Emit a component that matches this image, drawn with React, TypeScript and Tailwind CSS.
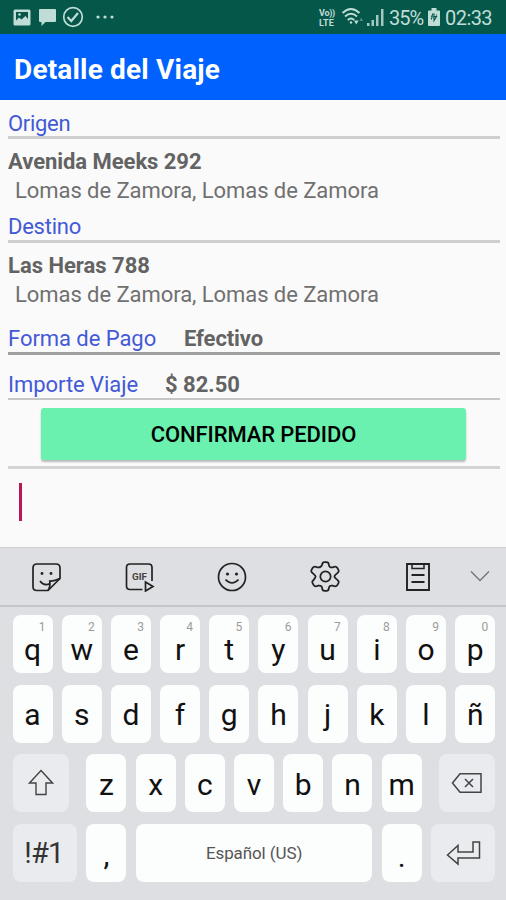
import type { ReactNode } from "react";

const label = "text-[22px] text-[#4359d6]";
const strong = "text-[22px] font-bold text-[#636363]";

function Place({ title, detail, strongSpacing }: { title: string; detail: string; strongSpacing: string }) {
  return (
    <div className="pt-[8px] leading-[30px]">
      <div className={`${strong} ${strongSpacing}`}>{title}</div>
      <div className="-mt-px pl-[7px] text-[22px] tracking-[-0.06px] text-[#707070]">{detail}</div>
    </div>
  );
}

function Key({ children, hint, className = "w-10" }: { children: ReactNode; hint?: string; className?: string }) {
  return (
    <div className={`relative flex h-[58px] shrink-0 items-center justify-center rounded-[8px] bg-[#fcfdfd] text-[30px] leading-none text-[#111] ${className}`}>
      {hint && <span className="absolute right-[7px] top-[6px] text-[12px] leading-none text-[#9b9b9b]">{hint}</span>}
      {children}
    </div>
  );
}

function Letters({ text }: { text: string }) {
  return (
    <>
      {text.split("").map((c) => (
        <Key key={c}><span className="pt-[3px]">{c}</span></Key>
      ))}
    </>
  );
}

function StatusBar() {
  return (
    <div className="flex h-[34px] items-center bg-[#045749] text-[#c0dcd6]">
      <svg className="ml-[13px]" width="18" height="17" viewBox="0 0 18 17">
        <path fill="currentColor" fillRule="evenodd" d="M2 .5h14a1.500 1.500 0 0 1 1.500 1.500v13a1.500 1.500 0 0 1-1.500 1.500H2A1.500 1.500 0 0 1 .5 15V2A1.500 1.500 0 0 1 2 .5zM3 3v8.500l3-3 2.500 2 4-3.500 2.500 3V3z" />
        <circle cx="6.500" cy="5.500" r="1.300" fill="currentColor" />
      </svg>
      <svg className="ml-[7px]" width="19" height="19" viewBox="0 0 19 19">
        <path fill="currentColor" d="M2 1h15q1 0 1 1v11q0 1-1 1H7.500L3.500 18v-4H2q-1 0-1-1V2q0-1 1-1z" />
      </svg>
      <svg className="ml-[5px]" width="22" height="22" viewBox="0 0 22 22" fill="none" stroke="currentColor">
        <circle cx="11" cy="11" r="9.300" strokeWidth="1.700" />
        <path d="M5.500 11l3.800 4L16 7" strokeWidth="2.200" />
      </svg>
      <svg className="ml-[11px]" width="20" height="6" viewBox="0 0 20 6" fill="currentColor">
        <circle cx="3" cy="3" r="1.600" /><circle cx="10" cy="3" r="1.600" /><circle cx="17" cy="3" r="1.600" />
      </svg>
      <div className="ml-auto mt-[2px] flex w-[20px] flex-col gap-px text-[9px] font-bold leading-[9px]">
        <div className="tracking-[-0.3px]">Vo))</div>
        <div className="tracking-[0.2px]">LTE</div>
      </div>
      <svg className="ml-[2px] shrink-0" width="23" height="20" viewBox="0 0 23 20" fill="none" stroke="currentColor" strokeWidth="1.900">
        <path d="M1.500 6q8.500-8 17 0M4 9.500q6-5.500 12 0M6.800 13q3.200-3 6.400 0" />
        <circle cx="10" cy="15.500" r="1.200" fill="currentColor" stroke="none" />
        <path fill="currentColor" stroke="none" d="M13 13.500h4.500L15.250 17.500z" />
        <path fill="currentColor" stroke="none" opacity=".4" d="M18.500 14h3.500l-1.750-3.500z" />
      </svg>
      <svg className="ml-[2px] shrink-0" width="19" height="19" viewBox="0 0 19 19" fill="currentColor">
        <path d="M1 15h2.500v3H1zM5.500 12H8v6H5.500zM10 7h2.500v11H10zM15 1h2.500v17H15z" opacity=".85" />
      </svg>
      <span className="ml-[4px] w-[35px] whitespace-nowrap pt-px text-[20px] leading-[22px] tracking-[-1px]">35%</span>
      <svg className="ml-[4px] shrink-0" width="12" height="18" viewBox="0 0 12 18">
        <path fill="currentColor" d="M3.500 0h5v2.500H11q1 0 1 1V17q0 1-1 1H1q-1 0-1-1V3.500q0-1 1-1h2.500z" />
        <path fill="none" stroke="#045749" strokeWidth="1.100" d="M5 5.500 3.500 9H6v3.500L8.500 8.500H6V5.500M3.500 10v1.500M8.500 6.500v1" />
      </svg>
      <span className="ml-[5px] mr-[14px] w-[47px] whitespace-nowrap pt-px text-[20px] leading-[22px] tracking-[-0.55px]">02:33</span>
    </div>
  );
}

function Toolbar() {
  return (
    <div className="flex h-[59px] items-center border-b-2 border-[#c3c5cc] pl-[31px] text-[#222]">
      <svg width="30" height="30" viewBox="0 0 30 30" fill="none" stroke="currentColor" strokeWidth="1.700">
        <path d="M17 28.500H6q-4 0-4-4V6q0-4 4-4h19q4 0 4 4v10.500z" />
        <path d="M17 28.500q2.500-3 1.800-9.500 4 .5 10.200-2.500M9 19q4 5.500 10 2.500" />
        <circle cx="11" cy="11.500" r="1.400" fill="currentColor" stroke="none" />
        <circle cx="20" cy="11.500" r="1.400" fill="currentColor" stroke="none" />
      </svg>
      <svg className="ml-[63px]" width="31" height="30" viewBox="0 0 31 30" fill="none" stroke="currentColor" strokeWidth="1.700">
        <path d="M18.500 27.500H6q-3.500 0-3.500-3.500V5.500Q2.500 2 6 2h18.500Q28 2 28 5.500V19" />
        <path d="M21.500 20v9l7.500-4.500z" />
        <text x="8" y="18" fontSize="9" fontWeight="700" fill="#444" stroke="none" textLength="15" lengthAdjust="spacingAndGlyphs">GIF</text>
      </svg>
      <svg className="ml-[62px]" width="30" height="30" viewBox="0 0 30 30" fill="none" stroke="currentColor" strokeWidth="1.700">
        <circle cx="15" cy="15" r="13.500" />
        <path d="M8.500 17.500q6.500 7 13 0" />
        <circle cx="10.500" cy="12" r="1.600" fill="currentColor" stroke="none" />
        <circle cx="19.500" cy="12" r="1.600" fill="currentColor" stroke="none" />
      </svg>
      <svg className="ml-[63px]" width="31" height="31" viewBox="0 0 30 30" fill="none" stroke="currentColor" strokeWidth="1.700" strokeLinejoin="round">
        <path d="M11.800 3.500Q12 1.200 14 1.200h2q2 0 2.200 2.300.3 3.300 3.800 2.600l1.500-.5q2-.5 3 1.200l1 1.800q.9 1.800-1 3.100-2.900 2.300-2.900 3.300t2.900 3.300q1.900 1.300 1 3.100l-1 1.800q-1 1.700-3 1.200l-1.500-.5q-3.500-.7-3.800 2.600-.2 2.300-2.200 2.300h-2q-2 0-2.200-2.300-.3-3.300-3.800-2.600l-1.500.5q-2 .5-3-1.200l-1-1.800q-.9-1.800 1-3.100Q5.400 16 5.400 15t-2.900-3.300q-1.900-1.300-1-3.100l1-1.800q1-1.700 3-1.200l1.500.5q3.500.7 4.800-2.600z" />
        <circle cx="15" cy="15" r="5" />
      </svg>
      <svg className="ml-[64px]" width="26" height="30" viewBox="0 0 26 30" fill="none" stroke="currentColor" strokeWidth="1.900">
        <path d="M2 2h22v26H2zM6.500 13h13M6.500 20h13" />
        <path d="M7 2v4.500h12V2" strokeWidth="1.500" />
      </svg>
      <svg className="ml-[39px]" width="20" height="13" viewBox="0 0 20 13" fill="none" stroke="#73757a" strokeWidth="1.400"><path d="M1 1.500l9 9 9-9" /></svg>
    </div>
  );
}

export default function App() {
  return (
    <div className="flex h-[900px] w-[506px] flex-col overflow-hidden bg-[#fafafa] font-[Roboto,sans-serif]">
      <StatusBar />
      <header className="flex h-[66px] items-center bg-[#0061ff] pl-[14px] pt-[5px] text-[28px] font-bold leading-none tracking-[0.18px] text-white">
        <span className="whitespace-nowrap">Detalle del Viaje</span>
      </header>
      <main className="h-[447px] whitespace-nowrap pl-2 pr-[6px]">
        <div className={`${label} h-[39px] border-b-[3px] border-[#cfcfcf] pt-[11px] leading-[26px] tracking-[-0.3px]`}>Origen</div>
        <Place title="Avenida Meeks 292" detail="Lomas de Zamora, Lomas de Zamora" strongSpacing="tracking-[-0.05px]" />
        <div className={`${label} h-[37px] border-b-[3px] border-[#cfcfcf] pt-[8px] leading-[26px] tracking-[-0.25px]`}>Destino</div>
        <Place title="Las Heras 788" detail="Lomas de Zamora, Lomas de Zamora" strongSpacing="tracking-[0px]" />
        <div className="flex h-[45px] border-b-[3px] border-[#a0a0a0] pt-[15px] leading-[27px]">
          <span className={`${label} w-[176px] tracking-[-0.05px]`}>Forma de Pago</span>
          <span className={`${strong} tracking-[-0.1px]`}>Efectivo</span>
        </div>
        <div className="flex h-[45px] border-b-2 border-[#c6c6c6] pt-[16px] leading-[27px]">
          <span className={`${label} w-[157px] tracking-[-0.05px]`}>Importe Viaje</span>
          <span className={strong}>$ 82.50</span>
        </div>
        <div className="flex h-[69px] border-b-[3px] border-[#d4d4d4] pl-[33px] pt-[8px]">
          <button className="h-[52px] w-[425px] rounded-[3px] bg-[#6bf1af] text-[22px] font-medium tracking-[-0.1px] text-black shadow-[0_2px_2px_#b9b9b9]">CONFIRMAR PEDIDO</button>
        </div>
        <div className="ml-[11px] mt-[14px] h-[38px] w-[3px] bg-[#b71855]" />
      </main>
      <section className="h-[353px] border-t border-[#cfcfd2] bg-[#dddfe2]">
        <Toolbar />
        <div className="flex flex-col gap-[11.700px] pl-[12.500px] pt-[8px]">
          <div className="flex gap-[9.200px]">
            {"qwertyuiop".split("").map((c, i) => (
              <Key key={c} hint={String((i + 1) % 10)}><span className="pt-[11px]">{c}</span></Key>
            ))}
          </div>
          <div className="flex gap-[9.200px]"><Letters text="asdfghjklñ" /></div>
          <div className="flex gap-[9.200px]">
            <Key className="mr-[8.300px] w-[56.500px] bg-[#e9ebef]!">
              <svg width="26" height="28" viewBox="0 0 26 28" fill="none" stroke="#444" strokeWidth="1.400"><path d="M13 1.500 24.500 14H18v11.500H8V14H1.500z" /></svg>
            </Key>
            <Letters text="zxcvbnm" />
            <Key className="ml-[8px] w-[56.500px] bg-[#e9ebef]!">
              <svg width="32" height="22" viewBox="0 0 32 22" fill="none" stroke="#444" strokeWidth="1.500"><path d="M1.500 11 9 1.800h21v18.400H9zM14 7l8 8M22 7l-8 8" /></svg>
            </Key>
          </div>
          <div className="flex gap-[9.200px]">
            <Key className="w-[64.800px] bg-[#e9ebef]!"><span className="pr-[2px] text-[29px] tracking-[-0.8px] text-[#333]">!#1</span></Key>
            <Key><span className="pt-[4px]">,</span></Key>
            <Key className="w-[236.800px]"><span className="text-[17px] tracking-[-0.1px] text-[#555]">Español (US)</span></Key>
            <Key><span className="pt-[7px]">.</span></Key>
            <Key className="w-[64.500px] bg-[#e9ebef]!">
              <svg width="35" height="26" viewBox="0 0 35 26" fill="none" stroke="#444" strokeWidth="1.500"><path d="M1.500 15 12 5.500v6.500h15V2h6.500v16H12v6z" /></svg>
            </Key>
          </div>
        </div>
      </section>
    </div>
  );
}
